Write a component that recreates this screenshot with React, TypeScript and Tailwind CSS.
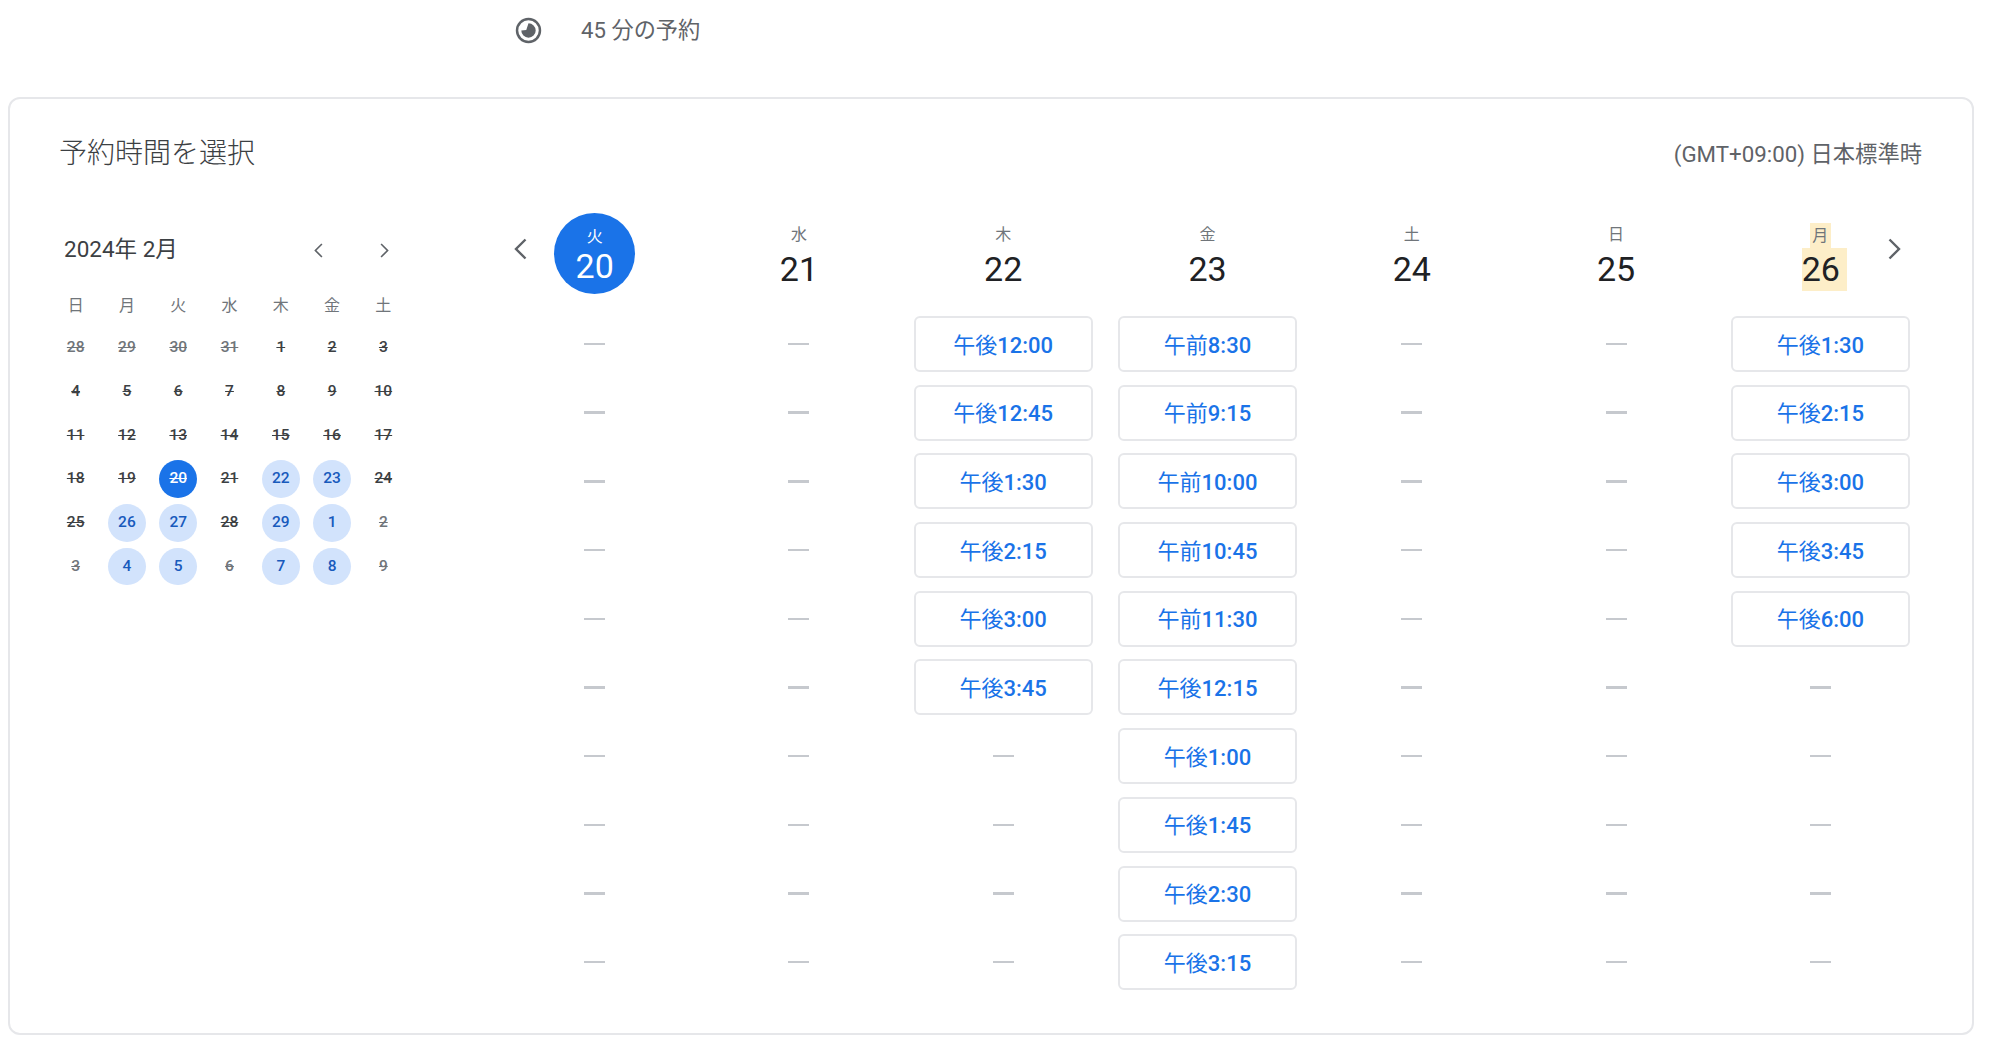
const sans = "font-['Roboto','Noto_Sans_CJK_JP',sans-serif]"

const weekdays = ["日", "月", "火", "水", "木", "金", "土"]

type DayKind = "past" | "plain" | "open" | "selected"
type Day = { n: number; kind: DayKind }

const d = (n: number, kind: DayKind = "plain"): Day => ({ n, kind })

const monthDays: Day[] = [
  d(28, "past"), d(29, "past"), d(30, "past"), d(31, "past"), d(1), d(2), d(3),
  d(4), d(5), d(6), d(7), d(8), d(9), d(10),
  d(11), d(12), d(13), d(14), d(15), d(16), d(17),
  d(18), d(19), d(20, "selected"), d(21), d(22, "open"), d(23, "open"), d(24),
  d(25), d(26, "open"), d(27, "open"), d(28), d(29, "open"), d(1, "open"), d(2, "past"),
  d(3, "past"), d(4, "open"), d(5, "open"), d(6, "past"), d(7, "open"), d(8, "open"), d(9, "past"),
]

const dayStyles: Record<DayKind, string> = {
  past: "text-[#70757a] line-through",
  plain: "text-[#3c4043] line-through",
  open: "bg-[#d2e3fc] text-[#185abc]",
  selected: "bg-[#1a73e8] text-white line-through",
}

const columns = [
  { label: "火", date: 20, slots: [] as string[] },
  { label: "水", date: 21, slots: [] as string[] },
  { label: "木", date: 22, slots: ["午後|12:00", "午後|12:45", "午後|1:30", "午後|2:15", "午後|3:00", "午後|3:45"] },
  { label: "金", date: 23, slots: ["午前|8:30", "午前|9:15", "午前|10:00", "午前|10:45", "午前|11:30", "午後|12:15", "午後|1:00", "午後|1:45", "午後|2:30", "午後|3:15"] },
  { label: "土", date: 24, slots: [] as string[] },
  { label: "日", date: 25, slots: [] as string[] },
  { label: "月", date: 26, slots: ["午後|1:30", "午後|2:15", "午後|3:00", "午後|3:45", "午後|6:00"] },
]

function DurationIcon() {
  return (
    <svg viewBox="0 0 24 24" className="h-[27px] w-[27px]">
      <circle cx="12" cy="12" r="10.2" fill="none" stroke="#5f6368" strokeWidth="2.2" />
      <path d="M12 5.6A6.4 6.4 0 1 1 5.6 12L10 11.5Z" fill="#5f6368" />
    </svg>
  )
}

function Chevron({ dir, className }: { dir: "left" | "right"; className: string }) {
  return (
    <svg viewBox="0 0 13 22" fill="none" className={className}>
      <path
        d={dir === "left" ? "M11.5 1.5 2 11l9.5 9.5" : "M1.5 1.5 11 11l-9.5 9.5"}
        stroke="#5f6368"
        strokeWidth="2.4"
      />
    </svg>
  )
}

function MiniCalendar() {
  return (
    <div className="mt-[16.5px] w-[359px] shrink-0">
      <div className="mb-[13px] flex h-10 items-center pl-[14px]">
        <span className="w-[116px] whitespace-nowrap text-[22.5px] text-[#3c4043]">2024年 2月</span>
        <Chevron dir="left" className="ml-[134px] mt-[1px] h-[15px] w-[9px]" />
        <Chevron dir="right" className="ml-[57px] mt-[1px] h-[15px] w-[9px]" />
      </div>
      <div className="grid grid-cols-7 auto-rows-[43.7px] items-center justify-items-center">
        {weekdays.map((w) => (
          <span key={w} className="pt-[3px] text-[16px] text-[#70757a]">{w}</span>
        ))}
        {monthDays.map((day, i) => (
          <span
            key={i}
            className={`flex h-[37.5px] w-[37.5px] items-center justify-center rounded-full text-[15.5px] font-medium ${dayStyles[day.kind]}`}
          >
            {day.n}
          </span>
        ))}
      </div>
    </div>
  )
}

function DayHeader({ label, date }: { label: string; date: number }) {
  if (date === 20) {
    return (
      <div className="flex h-[103px] justify-center">
        <div className="flex h-[81px] w-[81px] flex-col items-center rounded-full bg-[#1a73e8] pt-[12px] text-white">
          <span className="text-[16px] leading-6">{label}</span>
          <span className="mt-[-3px] text-[34px] leading-[40px]">{date}</span>
        </div>
      </div>
    )
  }
  if (date === 26) {
    return (
      <div className="flex h-[103px] flex-col items-center pt-[10px] text-[#202124]">
        <span className="bg-[#fdeec8] px-[2.5px] text-[16px] leading-[25px] text-[#70757a]">{label}</span>
        <span className="ml-[8px] bg-[#fdeec8] pr-[7px] text-[34px] leading-[43px]">{date}</span>
      </div>
    )
  }
  return (
    <div className="flex h-[103px] flex-col items-center pt-[9px] text-[#202124]">
      <span className="text-[16px] leading-[25px] text-[#70757a]">{label}</span>
      <span className="pt-[1px] text-[34px] leading-[43px]">{date}</span>
    </div>
  )
}

function Slot({ time }: { time?: string }) {
  if (!time) {
    return (
      <div className="flex h-[56px] items-center justify-center">
        <div className="h-[2.5px] w-[21px] bg-[#c6c9ce]" />
      </div>
    )
  }
  const [period, clock] = time.split("|")
  return (
    <button className="mx-auto flex h-[56px] w-[179px] items-center justify-center rounded-[6px] border-2 border-[#e6e7ea] bg-white pt-[2px] text-[22px] text-[#1a73e8]">
      <span>{period}</span>
      <span className="font-medium">{clock}</span>
    </button>
  )
}

function WeekPanel() {
  return (
    <div className="relative ml-[83.5px] w-[1430px] shrink-0">
      <Chevron dir="left" className="absolute left-[21.5px] top-[25px] h-[22px] w-[13px]" />
      <Chevron dir="right" className="absolute right-[21.5px] top-[25px] h-[22px] w-[13px]" />
      <div className="grid grid-cols-7">
        {columns.map((c) => (
          <div key={c.date}>
            <DayHeader label={c.label} date={c.date} />
            <div className="flex flex-col gap-[12.7px]">
              {Array.from({ length: 10 }, (_, i) => (
                <Slot key={i} time={c.slots[i]} />
              ))}
            </div>
          </div>
        ))}
      </div>
    </div>
  )
}

export default function App() {
  return (
    <div className={`min-h-screen bg-white ${sans}`}>
      <div className="flex h-[97px] items-start gap-[39px] pl-[515px] pt-[17px]">
        <DurationIcon />
        <span className="text-[22.2px] leading-[27px] text-[#5f6368]">45 分の予約</span>
      </div>
      <section className="ml-[8px] h-[938px] w-[1966px] rounded-[12px] border-2 border-[#e6e7ea]">
        <div className="flex h-[114px] items-start justify-between pl-[49px] pr-[50px] pt-[35px]">
          <h2 className="text-[28px] leading-10 font-light text-[#3c4043]">予約時間を選択</h2>
          <span className="text-[22.3px] leading-10 text-[#5f6368]">(GMT+09:00) 日本標準時</span>
        </div>
        <div className="flex pl-[40px]">
          <MiniCalendar />
          <WeekPanel />
        </div>
      </section>
    </div>
  )
}
